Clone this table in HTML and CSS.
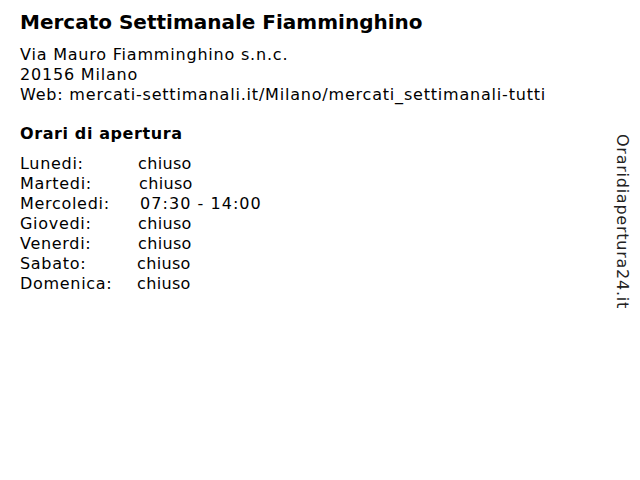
FILE: index.html
```html
<!DOCTYPE html>
<html lang="it">
<head>
<meta charset="utf-8">
<title>Mercato Settimanale Fiamminghino</title>
<link rel="stylesheet" href="styles.css">
</head>
<body>
<div class="page">
  <main class="content">
    <h1 class="title">Mercato Settimanale Fiamminghino</h1>
    <div class="address">
      <div>Via Mauro Fiamminghino s.n.c.</div>
      <div>20156 Milano</div>
      <div>Web: mercati-settimanali.it/Milano/mercati_settimanali-tutti</div>
    </div>
    <h2 class="subtitle">Orari di apertura</h2>
    <div class="hours">
      <span class="day">Lunedi:</span><span class="time">chiuso</span>
      <span class="day">Martedi:</span><span class="time shift1">chiuso</span>
      <span class="day">Mercoledi:</span><span class="time open shift2">07:30 - 14:00</span>
      <span class="day">Giovedi:</span><span class="time">chiuso</span>
      <span class="day">Venerdi:</span><span class="time">chiuso</span>
      <span class="day">Sabato:</span><span class="time back1">chiuso</span>
      <span class="day">Domenica:</span><span class="time back1">chiuso</span>
    </div>
  </main>
  <aside class="brand">Oraridiapertura24.it</aside>
</div>
</body>
</html>
```
FILE: styles.css
```css
html, body {
  margin: 0;
  padding: 0;
  background: #fff;
}
body {
  font-family: "DejaVu Sans", Verdana, sans-serif;
  color: #000;
  font-size: 16px;
  line-height: 20px;
}
.page {
  display: flex;
  justify-content: space-between;
  padding: 10px 8px 0 20px;
}
.title {
  font-size: 20px;
  line-height: 24px;
  font-weight: bold;
  margin: 0 0 11px 0;
}
.address {
  margin: 0;
  letter-spacing: 0.8px;
}
.subtitle {
  font-size: 16px;
  line-height: 20px;
  font-weight: bold;
  letter-spacing: 0.6px;
  margin: 19px 0 10px 0;
}
.hours {
  display: grid;
  grid-template-columns: 118px auto;
}
.day {
  letter-spacing: 0.7px;
}
.time {
  letter-spacing: 0.35px;
}
.time.open {
  letter-spacing: 1.05px;
}
.shift1 {
  margin-left: 1px;
}
.shift2 {
  margin-left: 2px;
}
.back1 {
  margin-left: -1px;
}
.brand {
  writing-mode: vertical-rl;
  font-size: 16px;
  line-height: 20px;
  letter-spacing: 0.75px;
  color: #222;
  margin-top: 124px;
}
```
